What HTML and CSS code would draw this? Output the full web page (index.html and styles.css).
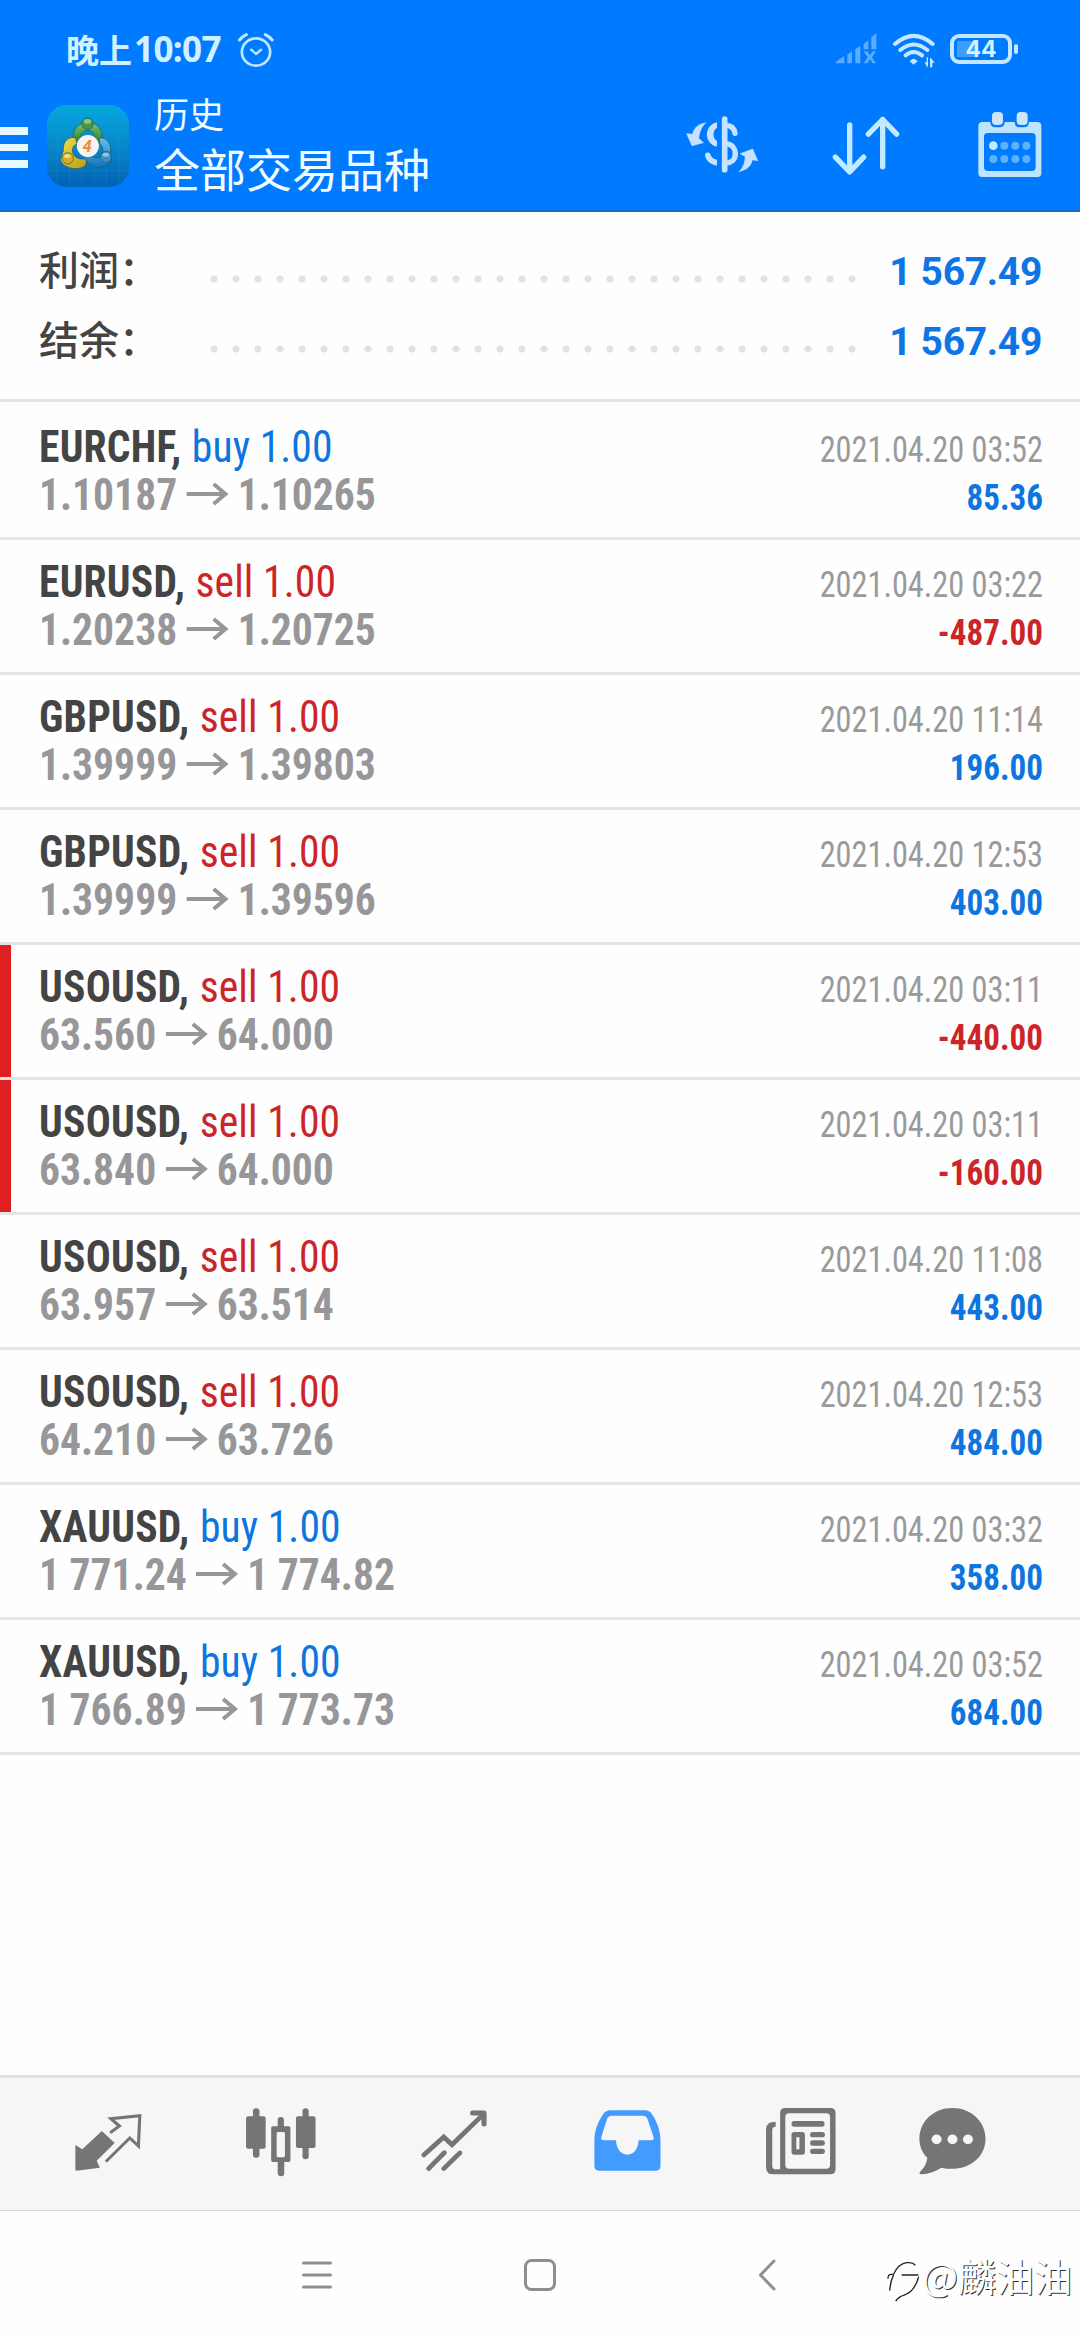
FILE: index.html
```html
<!DOCTYPE html>
<html lang="zh-CN">
<head>
<meta charset="utf-8">
<title>历史</title>
<link rel="stylesheet" href="styles.css">
</head>
<body>
<header class="header">
  <div class="status">
    <span class="clock"><span class="clock-zh">晚上</span>10:07</span>
    <svg class="alarm" viewBox="685 95 116 111" preserveAspectRatio="none" fill="none" stroke="#bfe6ff" stroke-linecap="round" stroke-linejoin="round"><circle cx="743" cy="155" r="41" stroke-width="8"/><path d="M729 148l14 13 15-13" stroke-width="7"/><path d="M695 119q8-10 20-16M790 119q-8-10-20-16" stroke-width="9"/></svg>
    <svg class="signal" viewBox="578 95 126 111" fill="#5cabff"><path d="M580 189v-4l26-18v22zM615 189v-26l14-10v36zM639 189v-42l15-11v53zM664 147v-16l14-11v27zM687 147v-36l15-13v49zM664 153h11l8 12 8-12h10l-12 18 12 18h-10l-8-12-8 12h-11l12-18z"/></svg>
    <svg class="wifi" viewBox="748 95 132 111" fill="none" stroke="#c3e8ff" stroke-width="12" stroke-linecap="round"><path d="M757 131q56-49 113 0M773 149q40-33 81 0M789 165q24-20 49 0"/><path d="M801 183q12-16 24 0l-12 10z" fill="#c3e8ff" stroke="none"/><path d="M846 186h6v-15h4v28h-3zM862 201v-28h3l11 14h-7v14z" fill="#c3e8ff" stroke="none"/></svg>
    <div class="battery"><span class="battery-text">44</span></div>
  </div>
  <div class="toolbar">
    <div class="menu"><i></i><i></i><i></i></div>
    <svg class="app" viewBox="54 45 245 246" preserveAspectRatio="none">
      <defs>
        <linearGradient id="bg" x1="0" y1="0" x2="0" y2="1"><stop offset="0" stop-color="#04a7df"/><stop offset=".5" stop-color="#0788cb"/><stop offset="1" stop-color="#0461b4"/></linearGradient>
        <linearGradient id="gr" x1="0" y1="0" x2="0" y2="1"><stop offset="0" stop-color="#7cc566"/><stop offset="1" stop-color="#207d3b"/></linearGradient>
        <linearGradient id="ye" x1="0" y1="0" x2="1" y2="1"><stop offset="0" stop-color="#f0e04f"/><stop offset="1" stop-color="#b99718"/></linearGradient>
        <linearGradient id="bl" x1="0" y1="0" x2="0" y2="1"><stop offset="0" stop-color="#66bff0"/><stop offset="1" stop-color="#1474c0"/></linearGradient>
      </defs>
      <rect x="54" y="45" width="245" height="246" rx="58" fill="url(#bg)"/>
      <path d="M84 50v236M121 46v244M158 46v244M195 46v244M232 46v244M269 50v236M56 90h241M56 128h241M56 166h241M56 204h241M56 242h241" stroke="#2da9da" stroke-opacity=".3" stroke-width="2"/>
      <g stroke="#1b5a5e" stroke-width="2" stroke-linejoin="round">
        <path d="M132 156c-4-36 14-59 44-59s48 24 44 62l-22 2c0-30-8-40-22-40s-24 12-24 38z" fill="url(#gr)"/>
        <path d="M139 143c-26-4-38 16-36 38l-9 28c4 22 46 36 74 20l8-26c-22 10-42 0-46-18 0-14 4-20 14-22z" fill="url(#ye)"/>
        <path d="M211 143c24 0 36 20 33 44l3 20c-8 24-48 34-70 12l-20-26 24-2c12 18 34 16 38 0 4-14 2-24-8-30z" fill="url(#bl)"/>
        <circle cx="175" cy="101" r="17" fill="#469a45"/><circle cx="116" cy="205" r="17" fill="#d7ac2c"/><circle cx="230" cy="201" r="17" fill="#398fca"/>
      </g>
      <ellipse cx="175" cy="94" rx="11" ry="7" fill="#a1d28e" opacity=".8"/><ellipse cx="115" cy="198" rx="10" ry="6" fill="#fbe884" opacity=".8"/><ellipse cx="230" cy="194" rx="10" ry="6" fill="#9cd3f2" opacity=".8"/>
      <circle cx="176" cy="168" r="33" fill="#f8f4ef"/>
      <text x="174" y="187" class="app-digit">4</text>
    </svg>
    <div class="titles"><div class="title-sub">历史</div><div class="title-main">全部交易品种</div></div>
    <svg class="ic-dollar" viewBox="135 345 222 177" fill="none" stroke="#c6e2ff" stroke-linecap="round">
      <path d="M254 357v152" stroke-width="17"/>
      <path d="M254 376c20-1 29 9 31 24M254 431c23 0 32 16 32 31 0 17-13 27-30 28" stroke-width="16"/>
      <path d="M231 367v17c-14 6-14 32 0 39v17c-40-8-40-65 0-73zM231 479v18c-20-3-33-14-36-31-1-10 13-12 16-3 3 9 8 14 20 16z" fill="#c6e2ff" stroke="none"/>
      <path d="M196 369c-21 3-34 14-38 34l-18-2 16 36 34-9-14-13c2-19 7-31 20-46zM298 515c23-7 35-16 39-36l16 3-15-35-37 14 15 9c-1 18-6 30-18 45z" fill="#c6e2ff" stroke="#c6e2ff" stroke-width="2" stroke-linejoin="round"/>
    </svg>
    <svg class="ic-sort" viewBox="570 345 210 185" fill="none" stroke="#c3eaff" stroke-width="16" stroke-linecap="round" stroke-linejoin="round"><path d="M626 374v141M583 471l43 44 42-44M725 500V358M682 402l43-44 42 44"/></svg>
    <svg class="ic-cal" viewBox="1007 333 198 201">
      <path fill-rule="evenodd" fill="#bfe4ff" d="M1023 366h24q0 16 15 16h12q16 0 16-16h30q0 16 15 16h12q16 0 16-16h25q12 0 12 12v141q0 12-12 12h-165q-12 0-12-12V378q0-12 12-12zm16 33q-11 0-11 11v92q0 11 11 11h133q11 0 11-11v-92q0-11-11-11z"/>
      <rect x="1052" y="336" width="33" height="39" rx="12" fill="#cde4fb"/><rect x="1126" y="336" width="33" height="39" rx="12" fill="#cde4fb"/>
      <g fill="#5cb2ff"><circle cx="1056" cy="437" r="13" fill="#bfeaff"/><circle cx="1089" cy="437" r="12"/><circle cx="1122" cy="437" r="12"/><circle cx="1155" cy="437" r="12"/><circle cx="1056" cy="477" r="12"/><circle cx="1089" cy="477" r="12"/><circle cx="1122" cy="477" r="12"/><circle cx="1155" cy="477" r="12"/></g>
    </svg>
  </div>
</header>

<section class="summary">
  <div class="sum-row"><span class="sum-label">利润：</span><span class="dots"></span><span class="sum-value">1 567.49</span></div>
  <div class="sum-row"><span class="sum-label">结余：</span><span class="dots"></span><span class="sum-value">1 567.49</span></div>
</section>

<main class="list" id="list"></main>

<nav class="tabs">
  <svg class="tab" viewBox="215 155 200 182" preserveAspectRatio="none" fill="none" stroke="#757575" stroke-width="9" stroke-linecap="round" stroke-linejoin="miter"><path d="M296 212l37 36-52 53 9 21-67 9q-4 0-4-4v-73l20 13z" fill="#757575" stroke="none"/><path d="M323 215l24-18-25-22 84-9-4 91-25-24-67 68"/></svg>
  <svg class="tab" viewBox="712 140 208 212" preserveAspectRatio="none" fill="#757575"><rect x="715" y="168" width="57" height="97" rx="6"/><rect x="735" y="144" width="19" height="148" rx="9"/><rect x="860" y="168" width="57" height="95" rx="6"/><rect x="879" y="144" width="18" height="153" rx="9"/><path fill-rule="evenodd" d="M807 198v-19q0-9 9-9t9 9v19h14q5 0 5 5v97q0 5-5 5h-13v34q0 9-9 9t-10-9v-34h-14q-5 0-5-5v-97q0-5 5-5zm1 17q-4 0-4 4v68q0 4 4 4h16q4 0 4-4v-68q0-4-4-4z"/></svg>
  <svg class="tab" viewBox="1220 148 197 190" preserveAspectRatio="none" fill="none" stroke="#757575" stroke-width="14" stroke-linecap="round" stroke-linejoin="miter"><path d="M1231 286l58-54 24 23 90-90M1245 327l46-48M1289 327l47-47"/><path d="M1373 160h33v33" stroke-width="15" stroke-linejoin="round"/></svg>
  <svg class="tab" viewBox="154 148 200 190" preserveAspectRatio="none"><path fill="#439aff" fill-rule="evenodd" d="M204 152h101q13 0 20 11c17 27 25 52 25 82v73q0 15-15 15H173q-15 0-15-15v-73c0-30 8-55 26-82q7-11 20-11zm5 16q-10 0-14 9l-17 56q-2 9 6 9h37c0 24 14 43 33 43s32-19 32-43h37q9 0 7-9l-18-56q-4-9-14-9z"/></svg>
  <svg class="tab" viewBox="654 140 208 206" preserveAspectRatio="none" fill="#757575"><path fill-rule="evenodd" d="M712 143h132q15 0 15 15v169q0 15-15 15H678q-21 0-21-22V206q0-22 28-22v15q-10-1-10 12v104q0 12 9 12h14V158q0-15 14-15zm12 16q-11 0-11 11v144q0 11 11 11h108q11 0 11-11V170q0-11-11-11z"/><rect x="731" y="182" width="96" height="17" rx="8"/><path fill-rule="evenodd" d="M739 215h23q8 0 8 8v52q0 8-8 8h-23q-8 0-8-8v-52q0-8 8-8zm6 16v36h9v-36z"/><rect x="785" y="215" width="43" height="16" rx="8"/><rect x="785" y="240" width="43" height="16" rx="8"/><rect x="785" y="265" width="43" height="16" rx="8"/></svg>
  <svg class="tab" viewBox="1099 140 200 206" preserveAspectRatio="none"><path fill="#757575" d="M1199 143c55 0 96 41 96 92 0 63-61 103-128 87q-27 18-57 20-12 0-3-10 17-17 19-40c-14-14-23-34-23-57 0-52 42-92 96-92z"/><g fill="#f6f6f6"><circle cx="1153" cy="237" r="14.500"/><circle cx="1199" cy="237" r="14.500"/><circle cx="1244" cy="237" r="14.500"/></g></svg>
</nav>

<footer class="sysnav">
  <svg class="nav-menu" viewBox="0 0 30 28" stroke="#8e8e8e" stroke-width="3" stroke-linecap="round"><path d="M1.500 2h27M1.500 14h27M1.500 26h27"/></svg>
  <svg class="nav-home" viewBox="0 0 32 32" fill="none" stroke="#8e8e8e" stroke-width="3"><rect x="1.500" y="1.500" width="29" height="29" rx="6"/></svg>
  <svg class="nav-back" viewBox="0 0 18 32" fill="none" stroke="#8e8e8e" stroke-width="3" stroke-linecap="round" stroke-linejoin="round"><path d="M16 2L2.500 16 16 30"/></svg>
  <div class="watermark">
    <svg class="wm-logo" viewBox="22 66 96 126" fill="none" stroke="#222" stroke-width="4"><path d="M25 122q0-13 9-13h8M42 108q14-30 38-34 20-2 27 8M42 110q-10 20-12 48M66 111h50M117 116c-6 24-20 48-45 56q-12 2-24 17"/></svg>
    <span>@麟油油</span>
  </div>
</footer>
<script src="list.js"></script>
</body>
</html>
```

FILE: styles.css
```css
* { box-sizing: border-box; }
body {
  margin: 0;
  width: 1080px;
  height: 2340px;
  display: flex;
  flex-direction: column;
  background: #fefefe;
  font-family: Roboto, "Noto Sans CJK SC", sans-serif;
  overflow: hidden;
}
svg { display: block; flex: none; }
.header { height: 212px; background: #007aff; border-bottom: 2px solid #1a66cc; flex: none; }

.status { height: 98px; display: flex; align-items: flex-start; padding: 32px 62px 0 66px; }
.clock {
  width: 170px;
  font: 700 35px/34px "Noto Sans", "Noto Sans CJK SC", sans-serif;
  color: #d2f1ff;
  white-space: nowrap;
  display: flex;
  letter-spacing: -.6px;
}
.clock-zh { font: 700 33px/34px "Noto Sans CJK SC", sans-serif; margin-right: 2px; letter-spacing: 0; }
.alarm { width: 40px; height: 37px; }
.signal { width: 42px; height: 37px; margin-left: auto; }
.wifi { width: 44px; height: 37px; margin-left: 15px; }
.battery {
  position: relative;
  width: 62px; height: 30px;
  margin: 2px 6px 0 14px;
  border: 4px solid #c3e8ff;
  border-radius: 9px;
  background: linear-gradient(#3f9dff, #3f9dff) 3px 3px / 18px 16px no-repeat;
}
.battery::after {
  content: "";
  position: absolute;
  right: -10px; top: 6px;
  width: 4px; height: 10px;
  border-radius: 2px;
  background: #c3e8ff;
}
.battery-text { display: block; font: 700 23px/23px Inter, sans-serif; color: #d8f3ff; text-align: center; }

.toolbar { height: 112px; display: flex; align-items: flex-start; }
.menu { width: 28px; padding-top: 29px; display: flex; flex-direction: column; gap: 9px; flex: none; }
.menu i { height: 7.500px; background: #e6f9ff; }
.app { width: 82px; height: 82px; margin: 7px 0 0 19px; }
.app-digit { font: italic 700 50px Roboto, sans-serif; fill: #ee8a3c; text-anchor: middle; }
.titles { color: #f0fcff; margin: -3px 0 0 25px; width: 531px; font-family: "Noto Sans CJK SC", sans-serif; }
.title-sub { font-size: 35px; line-height: 36px; }
.title-main { font-size: 46px; line-height: 60px; margin-top: 6px; }
.ic-dollar { width: 74px; height: 59px; margin-top: 17px; }
.ic-sort { width: 70px; height: 62px; margin: 17px 0 0 72px; }
.ic-cal { width: 66px; height: 67px; margin: 13px 0 0 76px; }

.summary { height: 190px; padding: 22px 38px 0 39px; border-bottom: 3px solid #e4e4e4; flex: none; }
.sum-row { height: 70px; display: flex; align-items: center; }
.sum-label { width: 171px; font: 500 40px/70px "Noto Sans CJK SC", sans-serif; color: #444; margin-top: -2px; }
.dots {
  width: 660px; height: 22px; margin-top: 20px;
  margin-right: auto;
  background: radial-gradient(circle at 4px 50%, #e2e2e2 3.300px, transparent 3.900px) 0 0 / 22px 22px;
}
.sum-value { font-size: 39px; font-weight: 700; color: #0d75e6; line-height: 70px; padding-top: 5px; letter-spacing: -.3px; }

.list { padding-top: 3px; flex: 1; font-family: "Roboto Condensed", Roboto, sans-serif; }
.deal {
  height: 135px;
  padding: 18px 37px 0 39px;
  border-bottom: 3px solid #e4e4e4;
  display: flex;
  justify-content: space-between;
}
.deal.marked { background: linear-gradient(#e02020, #e02020) 0 0 / 11px 132px no-repeat; }
.deal-left { font-size: 44px; line-height: 48px; font-weight: 700; }
.symbol { color: #444; letter-spacing: .25px; }
.side { font-weight: 400; margin-left: 11px; letter-spacing: .1px; }
.line { display: flex; white-space: pre; transform: scaleX(.945); transform-origin: left; }
.prices { color: #97979a; }
.arrow { width: 45px; height: 24px; margin: 11px 9px 0 10px; }
.deal-right { font-size: 36px; line-height: 48px; text-align: right; padding-top: 3px; }
.time { color: #9a9a9a; transform: scaleX(.897); transform-origin: right; }
.profit { font-weight: 700; transform: scaleX(.918); transform-origin: right; }
.blue { color: #0d75e0; }
.red { color: #cb2529; }

.tabs {
  height: 136px;
  background: #f6f6f6;
  border-top: 3px solid #e0e0e0;
  border-bottom: 1px solid #d8d8d8;
  display: flex;
  flex: none;
  padding-left: 74px;
}
.tab:nth-child(1) { width: 68.900px; height: 60.700px; margin-top: 33.500px; }
.tab:nth-child(2) { width: 71.600px; height: 70.700px; margin: 28.500px 0 0 102.300px; }
.tab:nth-child(3) { width: 67.800px; height: 63.300px; margin: 31px 0 0 103.300px; }
.tab:nth-child(4) { width: 68.900px; height: 63.300px; margin: 31px 0 0 105.100px; }
.tab:nth-child(5) { width: 71.600px; height: 68.700px; margin: 28.500px 0 0 103.300px; }
.tab:nth-child(6) { width: 68.900px; height: 68.700px; margin: 28.500px 0 0 81.600px; }

.sysnav { height: 129px; display: flex; align-items: flex-start; flex: none; padding-left: 302px; padding-top: 48px; }
.nav-menu { width: 30px; height: 28px; margin-top: 2px; }
.nav-home { width: 32px; height: 32px; margin-left: 192px; }
.nav-back { width: 18px; height: 32px; margin-left: 202px; }
.watermark {
  display: flex;
  margin: -6px 0 0 111px;
  font: 400 38px/44px "Noto Sans CJK SC", sans-serif;
  color: #fefefe;
  text-shadow: 1px 1px 0 #333;
  white-space: nowrap;
}
.wm-logo { width: 32px; height: 42px; margin-top: 7px; }
.watermark span { margin-left: 3px; }
```

FILE: list.js
```js
const deals = [
  ["EURCHF", "buy", "1.10187", "1.10265", "03:52", "85.36"],
  ["EURUSD", "sell", "1.20238", "1.20725", "03:22", "-487.00"],
  ["GBPUSD", "sell", "1.39999", "1.39803", "11:14", "196.00"],
  ["GBPUSD", "sell", "1.39999", "1.39596", "12:53", "403.00"],
  ["USOUSD", "sell", "63.560", "64.000", "03:11", "-440.00", true],
  ["USOUSD", "sell", "63.840", "64.000", "03:11", "-160.00", true],
  ["USOUSD", "sell", "63.957", "63.514", "11:08", "443.00"],
  ["USOUSD", "sell", "64.210", "63.726", "12:53", "484.00"],
  ["XAUUSD", "buy", "1 771.24", "1 774.82", "03:32", "358.00"],
  ["XAUUSD", "buy", "1 766.89", "1 773.73", "03:52", "684.00"]
];
const arrow = '<svg class="arrow" viewBox="0 0 43 24" preserveAspectRatio="none" fill="none" stroke="#97979a" stroke-width="4"><path d="M0 12h40M27.500 2L39.500 12 27.500 22"/></svg>';
document.getElementById("list").innerHTML = deals.map(([sym, side, open, close, time, profit, marked]) => `
<article class="deal${marked ? " marked" : ""}">
  <div class="deal-left">
    <div class="line"><span class="symbol">${sym},</span><span class="side ${side === "buy" ? "blue" : "red"}">${side} 1.00</span></div>
    <div class="line prices"><span>${open}</span>${arrow}<span>${close}</span></div>
  </div>
  <div class="deal-right">
    <div class="time">2021.04.20 ${time}</div>
    <div class="profit ${profit[0] === "-" ? "red" : "blue"}">${profit}</div>
  </div>
</article>`).join("");
```
